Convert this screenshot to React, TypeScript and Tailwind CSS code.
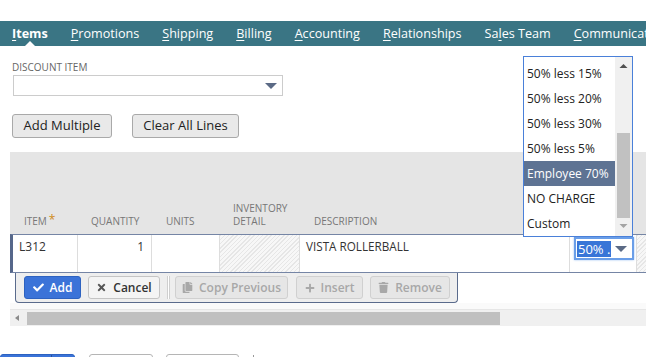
import { FaCheck, FaTimes, FaCopy, FaPlus, FaTrash } from "react-icons/fa"

const tabs = [
  { pre: "", key: "I", post: "tems", active: true },
  { pre: "", key: "P", post: "romotions" },
  { pre: "", key: "S", post: "hipping" },
  { pre: "", key: "B", post: "illing" },
  { pre: "", key: "A", post: "ccounting" },
  { pre: "", key: "R", post: "elationships" },
  { pre: "Sa", key: "l", post: "es Team" },
  { pre: "", key: "C", post: "ommunication" },
]

const options = [
  "50% less 15%",
  "50% less 20%",
  "50% less 30%",
  "50% less 5%",
  "Employee 70%",
  "NO CHARGE",
  "Custom",
]

const hatch =
  "bg-[repeating-linear-gradient(135deg,#e6e6e6_0px,#e6e6e6_1px,#f7f7f7_1px,#f7f7f7_3px)]"

function Caret({ className = "" }: { className?: string }) {
  return (
    <svg width="12" height="6" viewBox="0 0 12 6" className={className}>
      <polygon points="0,0 12,0 6,6" fill="#5b6a85" />
    </svg>
  )
}

export default function App() {
  return (
    <div className="relative w-[646px] h-[357px] overflow-hidden bg-white pt-[21px] font-['Open_Sans',sans-serif]">
      {/* subtabs */}
      <div className="flex h-[25px] items-center gap-[23px] bg-[#3a7584] pl-[12px] text-[12.6px] text-white whitespace-nowrap">
        {tabs.map((t) => (
          <div key={t.post} className={`relative h-full flex items-center pt-[1px] ${t.active ? "font-bold" : ""}`}>
            <span>
              {t.pre}
              <span className="underline underline-offset-2">{t.key}</span>
              {t.post}
            </span>
            {t.active && (
              <span className="absolute bottom-0 left-1/2 -translate-x-1/2 border-x-[5px] border-b-[5px] border-x-transparent border-b-white" />
            )}
          </div>
        ))}
      </div>

      <div className="mt-[15px] ml-[12px] text-[10px] leading-[12px] text-[#666] uppercase">Discount Item</div>
      <div className="mt-[2px] ml-[13px] flex h-[21px] w-[270px] items-center justify-end border border-[#ccc] pr-[5px]">
        <Caret />
      </div>

      <div className="mt-[18px] ml-[12px] flex gap-[20px]">
        <button className="h-[24px] w-[100px] rounded-[3px] border border-[#a9a9a9] bg-[#e9e9e9] text-[13px] text-[#222]">
          Add Multiple
        </button>
        <button className="h-[24px] w-[107px] rounded-[3px] border border-[#a9a9a9] bg-[#e9e9e9] text-[13px] text-[#222]">
          Clear All Lines
        </button>
      </div>

      {/* machine header */}
      <div className="mt-[14px] ml-[10px] flex h-[82px] items-end border-l-[3px] border-transparent bg-[#e5e5e5] pb-[6px] text-[10px] leading-[13px] text-[#777] uppercase">
        <div className="w-[65px] pl-[11px]">
          Item<span className="ml-[2px] align-top text-[12px] leading-[10px] text-[#d08a1a]">*</span>
        </div>
        <div className="w-[74px] pl-[13px]">Quantity</div>
        <div className="w-[68px] pl-[14px]">Units</div>
        <div className="w-[80px] pl-[13px]">
          Inventory
          <br />
          Detail
        </div>
        <div className="w-[270px] pl-[14px]">Description</div>
      </div>

      {/* current line */}
      <div className="ml-[10px] flex h-[39px] border-y border-l-[3px] border-y-[#7585a5] border-l-[#56678a] text-[12px] text-[#333]">
        <div className="w-[65px] border-r border-[#ddd] pl-[6px] pt-[3px]">L312</div>
        <div className="w-[74px] border-r border-[#ddd] pr-[7px] pt-[3px] text-right">1</div>
        <div className="w-[68px] border-r border-[#ddd]" />
        <div className={`w-[80px] border-r border-[#ddd] ${hatch}`} />
        <div className="w-[270px] border-r border-[#ddd] pl-[6px] pt-[3px] text-[11.7px]">VISTA ROLLERBALL</div>
        <div className="w-[67px] border-r border-[#ddd] pl-[4px] pt-[2px]">
          <div className="flex h-[23px] w-[60px] items-center justify-between border-2 border-[#6a9ee8] pl-[1px] pr-[5px] shadow-[0_0_2px_#9cc0f2]">
            <span className="bg-[#3875d7] px-[1px] leading-[16px] text-white text-[13px]">50% .</span>
            <Caret />
          </div>
        </div>
        <div className={`flex-1 ${hatch}`} />
      </div>

      {/* line buttons */}
      <div className="ml-[15px] flex h-[30px] w-[443px] items-center rounded-b-[4px] border-x border-b border-[#5a6b8c] bg-[#eeeeee] pl-[8px] text-[12px] font-semibold">
        <button className="flex h-[23px] w-[57px] items-center justify-center gap-[6px] rounded-[3px] border border-[#2d62c0] bg-[#3b73d8] text-white">
          <FaCheck className="text-[11px]" />
          Add
        </button>
        <button className="ml-[7px] flex h-[23px] w-[72px] items-center justify-center gap-[6px] rounded-[3px] border border-[#c4c4c4] bg-[#f4f4f4] text-[#333]">
          <FaTimes className="text-[11px] text-[#555]" />
          Cancel
        </button>
        <div className="ml-[7px] h-[23px] w-[3px] border-x border-[#cfcfcf] bg-white" />
        <button className="ml-[5px] flex h-[23px] w-[113px] items-center justify-center gap-[6px] rounded-[3px] border border-[#d0d0d0] bg-[#e6e6e6] text-[#a8a8a8]">
          <FaCopy className="text-[11px]" />
          Copy Previous
        </button>
        <button className="ml-[8px] flex h-[23px] w-[67px] items-center justify-center gap-[6px] rounded-[3px] border border-[#d0d0d0] bg-[#e6e6e6] text-[#a8a8a8]">
          <FaPlus className="text-[10px]" />
          Insert
        </button>
        <button className="ml-[7px] flex h-[23px] w-[80px] items-center justify-center gap-[6px] rounded-[3px] border border-[#d0d0d0] bg-[#e6e6e6] text-[#a8a8a8]">
          <FaTrash className="text-[11px]" />
          Remove
        </button>
      </div>

      <div className="ml-[10px] h-[7px] border-b border-[#e6e6e6] bg-[#fafafa]" />
      <div className="ml-[10px] flex h-[16px] items-center bg-[#f0f0f0]">
        <svg width="17" height="16" viewBox="0 0 17 16">
          <polygon points="5,8 9,5 9,11" fill="#8a8a8a" />
        </svg>
        <div className="h-[13px] w-[473px] bg-[#c0c0c0]" />
      </div>

      {/* footer buttons, cut off by the window */}
      <div className="mt-[28px] flex h-[24px] items-start">
        <div className="flex h-[24px] w-[75px] rounded-[3px] border border-[#2d62c0] bg-[#3b73d8]">
          <div className="w-[51px] border-r border-[#24509e]" />
        </div>
        <div className="ml-[14px] h-[24px] w-[64px] rounded-[3px] border border-[#b5b5b5] bg-white" />
        <div className="ml-[13px] h-[24px] w-[73px] rounded-[3px] border border-[#b5b5b5] bg-white" />
        <div className="ml-[14px] mt-[1px] h-[4px] w-[1px] bg-[#999]" />
      </div>

      {/* open dropdown list */}
      <div className="absolute left-[523px] top-[56px] flex h-[181px] w-[110px] border border-[#4a80d9] bg-white text-[12px] text-[#222]">
        <div className="flex-1 overflow-hidden pt-[4px]">
          {options.map((o) => (
            <div
              key={o}
              className={`h-[25px] pl-[3px] leading-[25px] whitespace-nowrap ${
                o === "Employee 70%" ? "bg-[#5e7393] text-white" : ""
              }`}
            >
              {o}
            </div>
          ))}
        </div>
        <div className="flex w-[17px] flex-col items-center bg-[#f0f0f0]">
          <svg width="9" height="17" viewBox="0 0 9 17" className="shrink-0">
            <polygon points="0.5,11 8.5,11 4.5,7" fill="#505050" />
          </svg>
          <div className="mt-[59px] h-[85px] w-[13px] bg-[#c1c1c1]" />
          <svg width="9" height="17" viewBox="0 0 9 17" className="shrink-0">
            <polygon points="0.5,6 8.5,6 4.5,10" fill="#a3a3a3" />
          </svg>
        </div>
      </div>
    </div>
  )
}
